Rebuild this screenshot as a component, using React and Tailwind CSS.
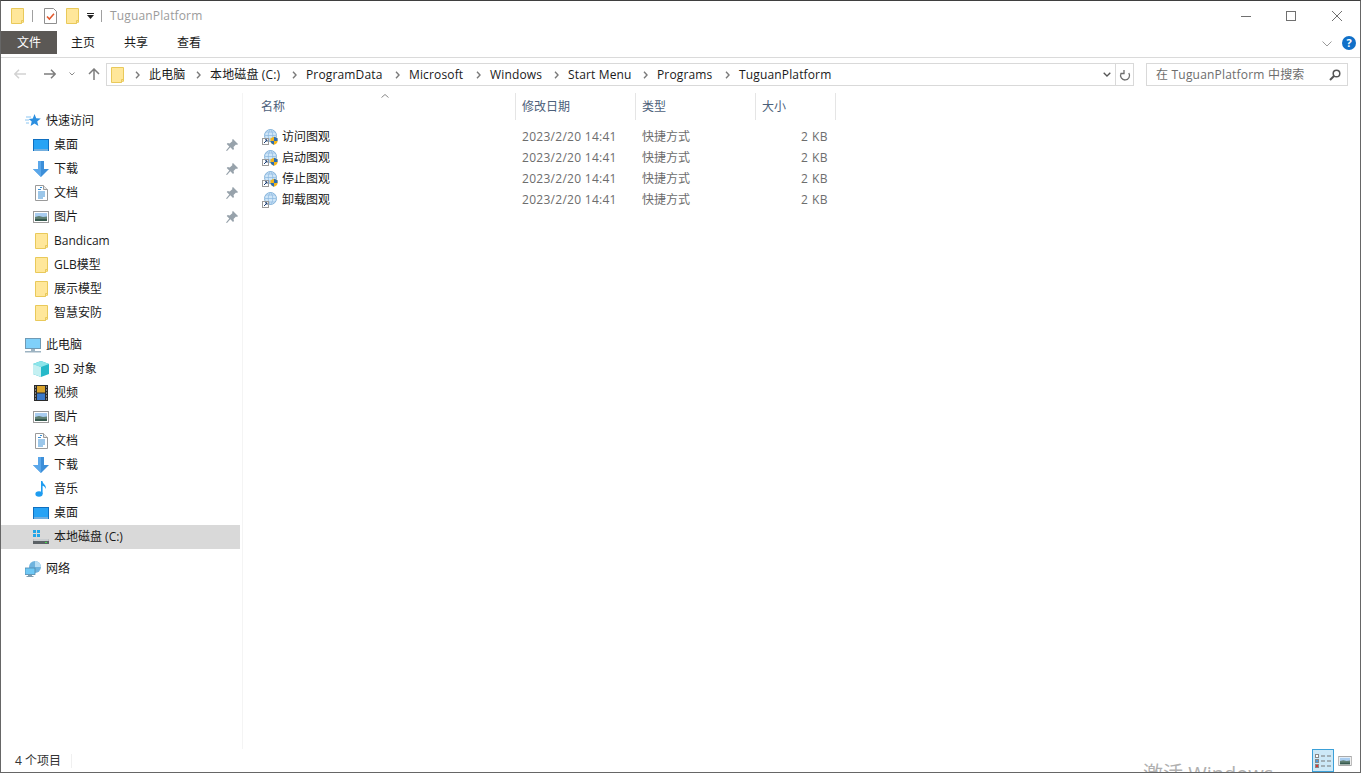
import React from "react";

const font = { fontFamily: '"Open Sans","Noto Sans CJK SC",sans-serif' };

const Folder = ({ className = "w-[13px] h-[16px]" }) => (
  <svg viewBox="0 0 13 16" className={className}>
    <path d="M.5.5h12v13.800h-2v1.200H.5z" fill="#ffe79a" stroke="#e9c95a" />
    <path d="M10.500 15.500v-3h2" fill="none" stroke="#e9c95a" />
  </svg>
);

const CheckDoc = () => (
  <svg viewBox="0 0 13 16" className="w-[13px] h-[16px]">
    <path d="M.5.5h9l3 3v12H.5z" fill="#fff" stroke="#8f8f8f" />
    <path d="M3 8.500l2.400 2.600L10 5.800" fill="none" stroke="#e2572b" strokeWidth="1.500" />
  </svg>
);

const Desktop = () => (
  <svg viewBox="0 0 16 12" className="w-[16px] h-[12px]">
    <rect width="16" height="12" fill="#0f6fc0" />
    <rect x="1" y="1" width="14" height="9" fill="#27a3f5" />
    <rect x="1" y="10.500" width="14" height="1" fill="#d8effd" />
  </svg>
);

const Download = () => (
  <svg viewBox="0 0 16 16" className="w-[16px] h-[16px]">
    <path d="M5 0h6v8h5l-8 8-8-8h5z" fill="#3d8fd9" />
    <path d="M5 0h3v16l-8-8h5z" fill="#5aa7ea" />
  </svg>
);

const Doc = () => (
  <svg viewBox="0 0 13 16" className="w-[13px] h-[16px]">
    <path d="M.5.5h8l4 4v11H.5z" fill="#fff" stroke="#9a9a9a" />
    <path d="M8.500.5v4h4" fill="#e8e8e8" stroke="#9a9a9a" />
    <path d="M3 4.500h3M5 2.500h2M3 7h7M3 9h7M3 11h7M3 13h5" stroke="#3a8fd4" />
  </svg>
);

const Picture = ({ className = "w-[16px] h-[12px]" }) => (
  <svg viewBox="0 0 16 12" className={className}>
    <rect x=".5" y=".5" width="15" height="11" fill="#fff" stroke="#9a9a9a" />
    <rect x="2" y="2" width="12" height="4" fill="#a9cdf0" />
    <path d="M2 6l4-1 4 1 4-.5V10H2z" fill="#5f7f72" />
    <rect x="2" y="8" width="12" height="2" fill="#375a4f" />
  </svg>
);

const Pin = () => (
  <svg viewBox="0 0 12 12" className="w-[12px] h-[12px]">
    <path d="M7 0l5 5-1 1-1-.5L7.500 8 8 10l-1 1-2.700-2.700L1 12l-1-.5 3.300-4L.7 5l1-1 2 .5L6.500 2 6 1z" fill="#97a2ab" />
  </svg>
);

const Star = () => (
  <svg viewBox="0 0 16 16" className="w-[16px] h-[16px]">
    <path d="M9.500 1l1.700 4.200 4.600.3-3.600 3 1.200 4.500-3.900-2.500L5.600 13l1.100-4.500L3.800 6l4-.6z" fill="#2b8fe0" />
    <path d="M1 4h5M0 7h4M1 10h3" stroke="#8cc6f2" />
  </svg>
);

const PC = () => (
  <svg viewBox="0 0 16 15" className="w-[16px] h-[15px]">
    <rect x=".5" y=".5" width="15" height="10" fill="#7fd0fa" stroke="#6f9ab5" />
    <path d="M6 11h4v2H6z" fill="#9db3c2" />
    <rect y="13" width="16" height="1.500" fill="#9db3c2" />
  </svg>
);

const Cube = () => (
  <svg viewBox="0 0 16 16" className="w-[16px] h-[16px]">
    <path d="M8 0l8 3v10l-8 3-8-3V3z" fill="#25b9c9" />
    <path d="M0 3l8 3 8-3-8-3z" fill="#8ce5ea" />
    <path d="M0 3l8 3v10l-8-3z" fill="#c4f0f2" />
  </svg>
);

const Film = () => (
  <svg viewBox="0 0 14 16" className="w-[14px] h-[16px]">
    <rect width="14" height="16" fill="#2a2a2a" />
    <rect x="3" y="1" width="8" height="6.500" fill="#d9a42c" />
    <rect x="3" y="8.500" width="8" height="6.500" fill="#3a78c9" />
    <path d="M1 2h1M1 5h1M1 8h1M1 11h1M1 14h1M12 2h1M12 5h1M12 8h1M12 11h1M12 14h1" stroke="#ddd" />
  </svg>
);

const Music = () => (
  <svg viewBox="0 0 12 16" className="w-[12px] h-[16px]">
    <ellipse cx="4" cy="13" rx="3.600" ry="2.800" fill="#1e9cf0" />
    <path d="M6 13V0h1.400c.4 3 3.800 3.500 3.600 8-.8-2-2.400-3-3.400-3.200V13z" fill="#1e9cf0" />
  </svg>
);

const Drive = () => (
  <svg viewBox="0 0 16 14" className="w-[16px] h-[14px]">
    <path d="M0 0h3v3H0zM4 0h3v3H4zM0 4h3v3H0zM4 4h3v3H4z" fill="#21a5e8" />
    <path d="M1 9h14l1 2v3H0v-3z" fill="#5c6266" />
    <path d="M1 9h14l1 2H0z" fill="#c9cdd0" />
    <rect x="12" y="12" width="2" height="1" fill="#43e04a" />
  </svg>
);

const Network = () => (
  <svg viewBox="0 0 16 16" className="w-[16px] h-[16px]">
    <circle cx="10" cy="6" r="6" fill="#6fb3de" />
    <path d="M10 0a6 6 0 016 6h-6z" fill="#b8ddf3" />
    <rect x="0" y="7" width="10" height="6.500" fill="#6fc8f5" stroke="#4e87ab" strokeWidth=".8" />
    <path d="M3 14h4v1H3zM1.500 15h7v1h-7z" fill="#7f9db0" />
  </svg>
);

const AppIcon = ({ shield = true }) => (
  <svg viewBox="0 0 16 16" className="w-[16px] h-[16px]">
    <circle cx="8.500" cy="6.500" r="6" fill="#cfe6f8" stroke="#86b4da" />
    <path d="M3 6.500h11M8.500 .5c-3 3-3 9 0 12M8.500 .5c3 3 3 9 0 12M4 3h9M4 10h9" stroke="#7fb0dc" strokeWidth=".6" fill="none" />
    <rect x="0.500" y="9.500" width="6" height="6" fill="#fff" stroke="#9a9a9a" />
    <path d="M2 14l3-3M3 10.800h2v2" stroke="#1d3f72" fill="none" />
    {shield && <path d="M8.500 9.200l3.500-1.400 3.500 1.400v3c0 1.800-1.700 3-3.500 3.600-1.800-.6-3.500-1.800-3.500-3.600z" fill="#f2b61c" />}
    {shield && <path d="M12 7.800l3.500 1.400V12H12zM12 12H8.500c0 1.800 1.700 3 3.500 3.800z" fill="#2a6db5" />}
  </svg>
);

const Chevron = () => (
  <svg viewBox="0 0 5 8" className="w-[5px] h-[8px] shrink-0">
    <path d="M1 .8L4 4 1 7.200" fill="none" stroke="#7a7a7a" strokeWidth="1.400" />
  </svg>
);

const NavRow = ({ icon, label, level = 2, pin, selected }) => (
  <div className={`h-[24px] flex items-center ${selected ? "bg-[#d9d9d9]" : ""}`}>
    <div className={`flex items-center justify-center w-[16px] shrink-0 ${level === 1 ? "ml-[24px] mr-[5px]" : "ml-[32px] mr-[5px]"}`}>
      {icon}
    </div>
    <span className="text-[12px] text-[#1a1a1a] whitespace-pre">{label}</span>
    {pin && <span className="ml-auto mr-[2px] flex"><Pin /></span>}
  </div>
);

const crumbs = [
  ["此电脑", "w-[47px]"],
  ["本地磁盘 (C:)", "w-[82px]"],
  ["ProgramData", "w-[89px]"],
  ["Microsoft", "w-[67px]"],
  ["Windows", "w-[64px]"],
  ["Start Menu", "w-[75px]"],
  ["Programs", "w-[68px]"],
  ["TuguanPlatform", "w-[100px]"],
];

const files = [
  ["访问图观", true],
  ["启动图观", true],
  ["停止图观", true],
  ["卸载图观", false],
];

export default function App() {
  return (
    <div style={font} className="relative w-[1361px] h-[773px] overflow-hidden bg-white border border-[#666666] border-t-[#3f3f3f] flex flex-col text-[12px]">
      <div className="h-[30px] flex items-center shrink-0">
        <div className="ml-[10px] flex"><Folder /></div>
        <div className="ml-[8px] w-px h-[12px] bg-[#a0a0a0]" />
        <div className="ml-[11px] flex"><CheckDoc /></div>
        <div className="ml-[9px] flex"><Folder /></div>
        <svg viewBox="0 0 8 8" className="ml-[8px] w-[8px] h-[8px]">
          <path d="M0 1h7v1H0zM0 3h7L3.500 7z" fill="#222" />
        </svg>
        <div className="ml-[6px] w-px h-[12px] bg-[#a0a0a0]" />
        <span className="ml-[8px] text-[12px] text-[#9b9b9b] tracking-[0.15px]">TuguanPlatform</span>
        <svg viewBox="0 0 10 10" className="ml-auto w-[10px] h-[10px]"><path d="M0 5.500h10" stroke="#707070" /></svg>
        <svg viewBox="0 0 10 10" className="ml-[35px] w-[10px] h-[10px]"><rect x=".5" y=".5" width="9" height="9" fill="none" stroke="#707070" /></svg>
        <svg viewBox="0 0 10 10" className="ml-[36px] mr-[18px] w-[10px] h-[10px]"><path d="M0 0l10 10M10 0L0 10" stroke="#707070" /></svg>
      </div>

      <div className="h-[27px] border-b border-[#dadada] shrink-0 flex items-start">
        <div className="w-[56px] h-[23px] bg-[#5b5855] text-white flex items-center justify-center">文件</div>
        <div className="ml-[14px] h-[24px] flex items-center gap-[29px] text-[#1a1a1a]">
          <span>主页</span><span>共享</span><span>查看</span>
        </div>
        <svg viewBox="0 0 10 6" className="ml-auto mt-[10px] w-[10px] h-[6px]"><path d="M.5.500l4.500 4.500 4.500-4.500" fill="none" stroke="#9a9a9a" /></svg>
        <div className="ml-[10px] mr-[4px] mt-[5px] w-[14px] h-[14px] rounded-full bg-[#1170c8] text-white text-[11px] font-bold flex items-center justify-center">?</div>
      </div>

      <div className="h-[35px] shrink-0 flex items-start pt-[5px]">
        <svg viewBox="0 0 12 10" className="ml-[13px] mt-[6px] w-[12px] h-[10px]"><path d="M12 5H1M5 .7L.8 5 5 9.300" fill="none" stroke="#d2d2d2" strokeWidth="1.500" /></svg>
        <svg viewBox="0 0 12 10" className="ml-[18px] mt-[6px] w-[12px] h-[10px]"><path d="M0 5h11M7 .7L11.200 5 7 9.300" fill="none" stroke="#7d7d7d" strokeWidth="1.500" /></svg>
        <svg viewBox="0 0 6 4" className="ml-[13px] mt-[9px] w-[6px] h-[4px]"><path d="M.5.500L3 3 5.500.5" fill="none" stroke="#8a8a8a" /></svg>
        <svg viewBox="0 0 12 12" className="ml-[13px] mt-[5px] w-[12px] h-[12px]"><path d="M6 12V1M1 6l5-5 5 5" fill="none" stroke="#7d7d7d" strokeWidth="1.500" /></svg>
        <div className="ml-[6px] w-[1028px] h-[23px] border border-[#d9d9d9] flex items-center text-[#1a1a1a]">
          <div className="ml-[4px] mr-[11px] flex"><Folder /></div>
          {crumbs.map(([t, w]) => (
            <React.Fragment key={t}>
              <Chevron />
              <span className={`ml-[9px] whitespace-pre tracking-[0.15px] ${w}`}>{t}</span>
            </React.Fragment>
          ))}
          <svg viewBox="0 0 8 5" className="ml-auto w-[8px] h-[5px]"><path d="M.7.700L4 4 7.300.7" fill="none" stroke="#555" strokeWidth="1.300" /></svg>
          <div className="ml-[4px] w-[18px] h-full border-l border-[#d9d9d9] flex items-center justify-center">
            <svg viewBox="0 0 12 12" className="w-[12px] h-[12px]"><path d="M9.800 3.500A4.500 4.500 0 112 4M5 .5V4H1.500" transform="translate(0 .5)" fill="none" stroke="#6d6d6d" strokeWidth="1.300" /></svg>
          </div>
        </div>
        <div className="ml-[12px] w-[202px] h-[23px] border border-[#d9d9d9] flex items-center text-[#6d6d6d]">
          <span className="ml-[9px] tracking-[0.2px]">在 TuguanPlatform 中搜索</span>
          <svg viewBox="0 0 12 12" className="ml-auto mr-[6px] w-[12px] h-[12px]"><circle cx="7.500" cy="4.500" r="3.300" fill="none" stroke="#555" strokeWidth="1.500" /><path d="M5 7l-4 4" stroke="#555" strokeWidth="2" /></svg>
        </div>
      </div>

      <div className="flex-1 flex min-h-0">
        <div className="w-[239px] shrink-0 pt-[16px] flex flex-col">
          <NavRow level={1} icon={<Star />} label="快速访问" />
          <NavRow icon={<Desktop />} label="桌面" pin />
          <NavRow icon={<Download />} label="下载" pin />
          <NavRow icon={<Doc />} label="文档" pin />
          <NavRow icon={<Picture />} label="图片" pin />
          <NavRow icon={<Folder />} label="Bandicam" />
          <NavRow icon={<Folder />} label="GLB模型" />
          <NavRow icon={<Folder />} label="展示模型" />
          <NavRow icon={<Folder />} label="智慧安防" />
          <div className="h-[8px]" />
          <NavRow level={1} icon={<PC />} label="此电脑" />
          <NavRow icon={<Cube />} label="3D 对象" />
          <NavRow icon={<Film />} label="视频" />
          <NavRow icon={<Picture />} label="图片" />
          <NavRow icon={<Doc />} label="文档" />
          <NavRow icon={<Download />} label="下载" />
          <NavRow icon={<Music />} label="音乐" />
          <NavRow icon={<Desktop />} label="桌面" />
          <NavRow icon={<Drive />} label="本地磁盘 (C:)" selected />
          <div className="h-[8px]" />
          <NavRow level={1} icon={<Network />} label="网络" />
        </div>
        <div className="ml-[2px] w-px bg-[#f4f4f4]" />
        <div className="flex-1 min-w-0">
          <div className="relative h-[27px] flex text-[#4c607a]">
            <svg viewBox="0 0 8 4" className="absolute left-[138px] top-[1px] w-[8px] h-[4px]"><path d="M.5 3.500L4 .5l3.500 3" fill="none" stroke="#8a8a8a" /></svg>
            <div className="w-[273px] border-r border-[#e5e5e5] pl-[18px] flex items-center">名称</div>
            <div className="w-[120px] border-r border-[#e5e5e5] pl-[6px] flex items-center">修改日期</div>
            <div className="w-[120px] border-r border-[#e5e5e5] pl-[6px] flex items-center">类型</div>
            <div className="w-[80px] border-r border-[#e5e5e5] pl-[6px] flex items-center">大小</div>
          </div>
          <div className="pt-[6px]">
            {files.map(([name, shield]) => (
              <div key={name} className="h-[21px] flex items-center text-[#6d6d6d]">
                <div className="w-[272px] pl-[19px] flex items-center">
                  <AppIcon shield={shield} />
                  <span className="ml-[4px] text-[#1a1a1a]">{name}</span>
                </div>
                <div className="w-[120px] pl-[7px] tracking-[0.28px]">2023/2/20 14:41</div>
                <div className="w-[120px] pl-[7px]">快捷方式</div>
                <div className="w-[73px] text-right tracking-[0.5px]">2 KB</div>
              </div>
            ))}
          </div>
        </div>
      </div>

      <div className="h-[23px] shrink-0 flex items-center">
        <span className="ml-[14px] text-[#333]">4 个项目</span>
        <div className="ml-[10px] w-px h-[14px] bg-[#f0f0f0]" />
        <div className="ml-auto w-[22px] h-[23px] border border-[#3ba0d8] bg-[#cce8f7] flex items-center justify-center">
          <svg viewBox="0 0 16 14" className="w-[16px] h-[14px]">
            <rect x=".5" y=".5" width="3" height="3" fill="#fff" stroke="#888" />
            <rect x=".5" y="5.500" width="3" height="3" fill="#4b9be0" stroke="#888" />
            <rect x=".5" y="10.500" width="3" height="3" fill="#d43a3a" stroke="#888" />
            <path d="M6 2h4M12 2h4M6 7h4M12 7h4M6 12h4M12 12h4" stroke="#777" />
          </svg>
        </div>
        <div className="ml-[4px] mr-[8px] flex"><Picture className="w-[14px] h-[10px]" /></div>
      </div>

      <div className="absolute left-[1142px] top-[761px] text-[20px] leading-[24px] text-[#b0b0b0] whitespace-pre">激活 Windows</div>
    </div>
  );
}
